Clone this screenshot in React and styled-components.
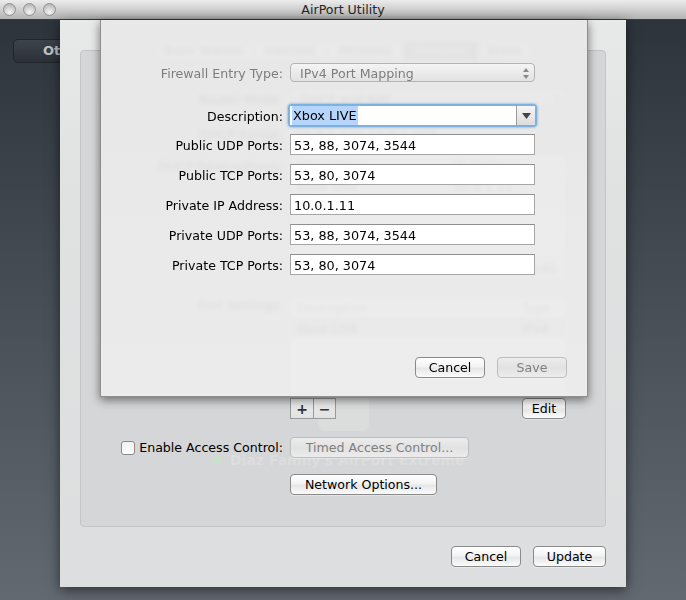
import styled, { createGlobalStyle } from "styled-components";

const GlobalStyle = createGlobalStyle`
  html, body { margin: 0; padding: 0; background: #2f353d; }
  * { box-sizing: border-box; }
  #root { width: 686px; height: 600px; overflow: hidden; }
`;

const Page = styled.div`
  position: relative;
  width: 686px;
  height: 600px;
  display: flex;
  flex-direction: column;
  overflow: hidden;
  font-family: "DejaVu Sans", sans-serif;
  font-size: 12.6px;
  color: #000;
`;

const TitleBar = styled.div`
  position: relative;
  flex: 0 0 20px;
  display: flex;
  align-items: center;
  justify-content: center;
  background: linear-gradient(#ececec, #d6d6d6 40%, #b3b3b3);
  border-bottom: 1px solid #3c3c3c;
  color: #262626;
  padding-bottom: 1px;
`;

const Lights = styled.div`
  position: absolute;
  left: 3px;
  top: 3px;
  display: flex;
  gap: 7px;
`;

const Light = styled.span`
  width: 13px;
  height: 13px;
  border-radius: 50%;
  border: 1px solid #949494;
  background: radial-gradient(circle at 50% 75%, #f4f4f4, #cdcdcd 55%, #a8a8a8);
`;

const Desktop = styled.div`
  flex: 1;
  display: flex;
  background: linear-gradient(#2e343c, #626971);
`;

const BackPane = styled.div`
  flex: 0 0 60px;
  padding: 19px 0 0 13px;
  overflow: hidden;
`;

const BackButton = styled.div`
  width: 92px;
  height: 24px;
  border: 1px solid #20252b;
  border-radius: 5px;
  background: linear-gradient(#3d434c, #2c3138);
  color: #c0c3c6;
  font-size: 13px;
  font-weight: 700;
  line-height: 22px;
  padding-left: 29px;
`;

const Sheet = styled.div`
  position: relative;
  width: 566px;
  height: 567px;
  padding: 30px 20px 20px;
  display: flex;
  flex-direction: column;
  gap: 19px;
  background: linear-gradient(#e8e9e9, #e0e2e2 30%, #dcdedf);
  box-shadow: 0 3px 12px rgba(0, 0, 0, 0.55);
`;

const Group = styled.div`
  position: relative;
  isolation: isolate;
  height: 477px;
  padding: 0 39px 0 0;
  border: 1px solid #c3c5c6;
  border-radius: 4px;
  background: #d5d6d7;
  display: flex;
  flex-direction: column;
`;

const IconGhost = styled.div`
  position: absolute;
  z-index: -1;
  left: 237px;
  top: 340px;
  width: 51px;
  height: 40px;
  border-radius: 7px;
  background: #dbdcdc;
`;

const NameGhost = styled.div`
  position: absolute;
  z-index: -1;
  left: 131px;
  top: 401px;
  display: flex;
  align-items: center;
  gap: 8px;
  color: #dcdddd;
  font-size: 14px;
  font-weight: 700;
  white-space: nowrap;
`;

const GreenDot = styled.span`
  width: 10px;
  height: 10px;
  border-radius: 50%;
  background: #cbe0cc;
`;

const Tabs = styled.div`
  align-self: center;
  margin: -10px -39px 0 0;
  height: 20px;
  display: flex;
  border: 1px solid #c4c4c4;
  border-radius: 4px;
  background: #f4f4f4;
`;

const Tab = styled.div`
  width: ${(p) => p.$w}px;
  text-align: center;
  line-height: 18px;
  background: ${(p) => (p.$on ? "#8f8f8f" : "transparent")};
  color: ${(p) => (p.$on ? "#fff" : "#222")};
  border-right: 1px solid #ccc;
  &:last-child { border-right: none; }
`;

const Row = styled.div`
  display: grid;
  grid-template-columns: 202px 276px;
  column-gap: 7px;
  align-items: ${(p) => p.$align || "center"};
  margin-top: ${(p) => p.$top || 0}px;
`;

const Label = styled.div`
  text-align: right;
  white-space: nowrap;
  color: ${(p) => (p.$dim ? "#7d7d7d" : "#000")};
  padding-top: ${(p) => p.$pad ?? 1}px;
  margin-top: ${(p) => p.$top || 0}px;
`;

const CheckLabel = styled.label`
  display: flex;
  justify-content: flex-end;
  align-items: center;
  gap: 4px;
  white-space: nowrap;
`;

const CheckBox = styled.span`
  width: 14px;
  height: 14px;
  border: 1px solid #8b8b8b;
  border-radius: 3px;
  background: linear-gradient(#f2f2f2, #fff);
`;

const Popup = styled.div`
  position: relative;
  height: 19px;
  display: flex;
  align-items: center;
  padding: 1px 9px 0;
  border: 1px solid #b4b4b4;
  border-radius: 4px;
  background: linear-gradient(#f4f4f4, #e2e2e2);
  color: ${(p) => (p.$dim ? "#7d7d7d" : "#000")};
`;

const Stepper = styled.svg`
  position: absolute;
  right: 4px;
  top: 3px;
`;

const Value = styled.div`
  padding-left: 5px;
`;

const Table = styled.div`
  height: ${(p) => p.$h}px;
  background: #fff;
  border: 1px solid #cfcfcf;
  overflow: hidden;
`;

const TableRow = styled.div`
  height: 20px;
  display: grid;
  grid-template-columns: ${(p) => p.$cols};
  align-items: center;
  padding-left: 5px;
  background: ${(p) => (p.$on ? "#c9c9c9" : "transparent")};
  border-bottom: ${(p) => (p.$head ? "1px solid #c4c4c4" : "none")};
  color: ${(p) => (p.$head ? "#444" : "#000")};
`;

const ToolRow = styled.div`
  display: flex;
  justify-content: space-between;
  align-items: flex-start;
`;

const Segments = styled.div`
  display: flex;
  border: 1px solid #9a9a9a;
`;

const Segment = styled.span`
  width: 22px;
  height: 19px;
  display: flex;
  align-items: center;
  justify-content: center;
  background: linear-gradient(#eeeeee, #e2e2e2);
  font-size: 14px;
  font-weight: 700;
  color: #333;
  & + & { border-left: 1px solid #9a9a9a; }
`;

const Button = styled.div`
  width: ${(p) => p.$w}px;
  height: 21px;
  flex: none;
  display: flex;
  align-items: center;
  justify-content: center;
  white-space: nowrap;
  border: 1px solid ${(p) => (p.$off ? "#bdbdbd" : "#8a8a8a")};
  border-radius: 4px;
  background: ${(p) =>
    p.$off
      ? "linear-gradient(#ececec, #e2e2e2 50%, #ececec)"
      : "linear-gradient(#fff, #f3f3f3 45%, #e7e7e7 55%, #fbfbfb)"};
  color: ${(p) => (p.$off ? "#7f7f7f" : "#000")};
  box-shadow: 0 1px 0 rgba(255, 255, 255, 0.35);
`;

const SheetFooter = styled.div`
  display: flex;
  justify-content: flex-end;
  gap: 12px;
`;

const Dialog = styled.div`
  position: absolute;
  left: 40px;
  top: 0;
  width: 488px;
  height: 377px;
  padding: 43px 52px 0 0;
  display: flex;
  flex-direction: column;
  background: linear-gradient(rgba(232, 232, 232, 0.94), rgba(236, 236, 236, 0.94));
  backdrop-filter: blur(2px);
  border: 1px solid #8e8e8e;
  border-top: none;
  box-shadow: 0 3px 9px rgba(0, 0, 0, 0.5);
`;

const DialogForm = styled.div`
  display: grid;
  grid-template-columns: 182px 1fr;
  column-gap: 7px;
  row-gap: 9px;
  align-items: center;
`;

const FocusWrap = styled.div`
  display: flex;
  height: 19px;
  margin-top: 15px;
  border-radius: 2px;
  background: #fff;
  box-shadow: 0 0 0 2px #7db1e0, 0 0 2px 3px rgba(125, 177, 224, 0.6);
`;

const ComboInput = styled.div`
  flex: 1;
  padding: 0 0 0 2px;
  display: flex;
  align-items: center;
  background: #fff;
  font-size: 12.8px;
`;

const Selected = styled.span`
  background: #b5d5fd;
  padding: 2px 1px;
`;

const ComboArrow = styled.span`
  width: 19px;
  display: flex;
  align-items: center;
  justify-content: center;
  border-left: 1px solid #9d9d9d;
  background: linear-gradient(#f6f6f6, #dcdcdc);
`;

const Field = styled.div`
  height: 21px;
  padding: 1px 0 0 3px;
  display: flex;
  align-items: center;
  background: #fff;
  border: 1px solid #a6a6a6;
  border-top-color: #8f8f8f;
  font-size: 12.8px;
`;

const DialogFooter = styled.div`
  margin: auto -32px 18px 0;
  display: flex;
  justify-content: flex-end;
  gap: 12px;
`;

const SortArrows = () => (
  <Stepper width="8" height="13" viewBox="0 0 8 13">
    <path d="M4 1 L7 5 H1 Z M4 12 L7 8 H1 Z" fill="#8a8a8a" />
  </Stepper>
);

const fields = [
  ["Public UDP Ports:", "53, 88, 3074, 3544"],
  ["Public TCP Ports:", "53, 80, 3074"],
  ["Private IP Address:", "10.0.1.11"],
  ["Private UDP Ports:", "53, 88, 3074, 3544"],
  ["Private TCP Ports:", "53, 80, 3074"],
];

export default function App() {
  return (
    <Page>
      <GlobalStyle />
      <TitleBar>
        <Lights>
          <Light />
          <Light />
          <Light />
        </Lights>
        AirPort Utility
      </TitleBar>
      <Desktop>
        <BackPane>
          <BackButton>Other...</BackButton>
        </BackPane>
        <Sheet>
          <Group>
            <IconGhost />
            <NameGhost>
              <GreenDot />
              Diaz Family's AirPort Extreme
            </NameGhost>
            <Tabs>
              <Tab $w={98}>Base Station</Tab>
              <Tab $w={74}>Internet</Tab>
              <Tab $w={76}>Wireless</Tab>
              <Tab $w={75} $on>Network</Tab>
              <Tab $w={52}>Disks</Tab>
            </Tabs>
            <Row $top={28}>
              <Label>Router Mode:</Label>
              <Popup>
                DHCP and NAT
                <SortArrows />
              </Popup>
            </Row>
            <Row $top={18}>
              <Label>DHCP Range:</Label>
              <Value>10.0.1.2 to 10.0.1.200</Value>
            </Row>
            <Row $top={13} $align="start">
              <Label $pad={4}>DHCP Reservations:</Label>
              <Table $h={103}>
                <TableRow $head $cols="157px 1fr">
                  <span>Description</span>
                  <span>IP Address</span>
                </TableRow>
                <TableRow $cols="157px 1fr">
                  <span>Xbox LIVE</span>
                  <span>10.0.1.11</span>
                </TableRow>
              </Table>
            </Row>
            <Row>
              <span />
              <ToolRow>
                <Segments>
                  <Segment>+</Segment>
                  <Segment>−</Segment>
                </Segments>
                <Button $w={44}>Edit</Button>
              </ToolRow>
            </Row>
            <Row $top={18} $align="start">
              <Label>Port Settings:</Label>
              <Table $h={101}>
                <TableRow $head $cols="226px 1fr">
                  <span>Description</span>
                  <span>Type</span>
                </TableRow>
                <TableRow $on $cols="226px 1fr">
                  <span>Xbox LIVE</span>
                  <span>IPv4</span>
                </TableRow>
              </Table>
            </Row>
            <Row>
              <span />
              <ToolRow>
                <Segments>
                  <Segment>+</Segment>
                  <Segment>−</Segment>
                </Segments>
                <Button $w={44}>Edit</Button>
              </ToolRow>
            </Row>
            <Row $top={18}>
              <CheckLabel>
                <CheckBox />
                Enable Access Control:
              </CheckLabel>
              <Button $off $w={179}>Timed Access Control...</Button>
            </Row>
            <Row $top={16}>
              <span />
              <Button $w={147}>Network Options...</Button>
            </Row>
          </Group>
          <SheetFooter>
            <Button $w={70}>Cancel</Button>
            <Button $w={73}>Update</Button>
          </SheetFooter>
          <Dialog>
            <DialogForm>
              <Label $dim>Firewall Entry Type:</Label>
              <Popup $dim>
                IPv4 Port Mapping
                <SortArrows />
              </Popup>
              <Label $top={15}>Description:</Label>
              <FocusWrap>
                <ComboInput>
                  <Selected>Xbox LIVE</Selected>
                </ComboInput>
                <ComboArrow>
                  <svg width="9" height="6" viewBox="0 0 9 6">
                    <path d="M0 0 H9 L4.5 6 Z" fill="#444" />
                  </svg>
                </ComboArrow>
              </FocusWrap>
              {fields.flatMap(([label, value]) => [
                <Label key={label}>{label}</Label>,
                <Field key={label + value}>{value}</Field>,
              ])}
            </DialogForm>
            <DialogFooter>
              <Button $w={70}>Cancel</Button>
              <Button $off $w={70}>Save</Button>
            </DialogFooter>
          </Dialog>
        </Sheet>
      </Desktop>
    </Page>
  );
}
